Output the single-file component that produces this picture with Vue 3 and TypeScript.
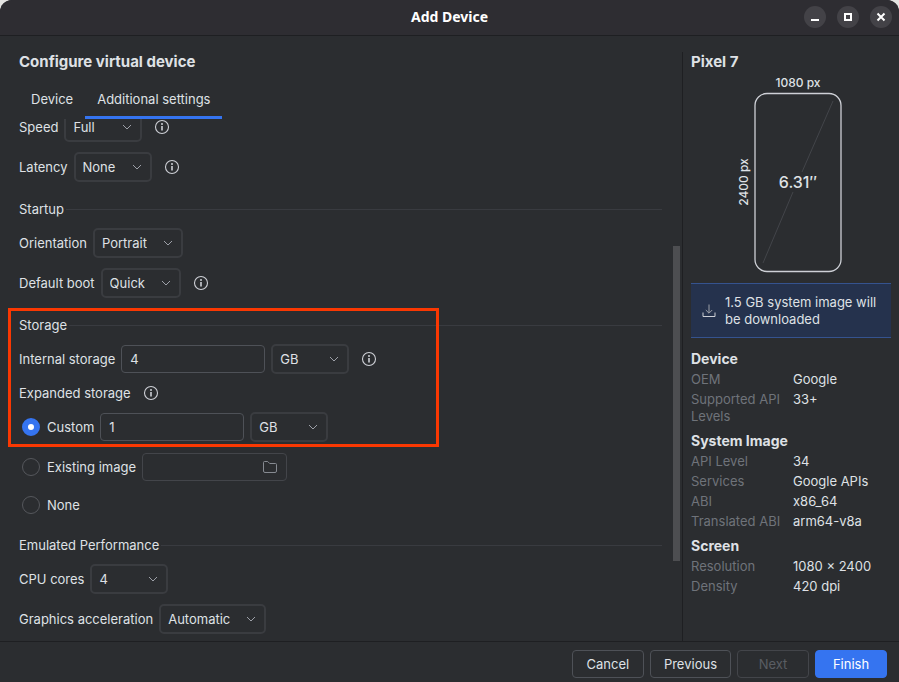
<script setup lang="ts">
import { ref } from 'vue'

interface DetailRow {
  label: string
  value: string
}
interface DetailGroup {
  title: string
  rows: DetailRow[]
}

const speed = ref('Full')
const latency = ref('None')
const orientation = ref('Portrait')
const boot = ref('Quick')
const internalSize = ref('4')
const internalUnit = ref('GB')
const expandedMode = ref('custom')
const customSize = ref('1')
const customUnit = ref('GB')
const imagePath = ref('')
const cores = ref('4')
const graphics = ref('Automatic')

const units = ['MB', 'GB', 'TB']

const details: DetailGroup[] = [
  {
    title: 'Device',
    rows: [
      { label: 'OEM', value: 'Google' },
      { label: 'Supported API Levels', value: '33+' },
    ],
  },
  {
    title: 'System Image',
    rows: [
      { label: 'API Level', value: '34' },
      { label: 'Services', value: 'Google APIs' },
      { label: 'ABI', value: 'x86_64' },
      { label: 'Translated ABI', value: 'arm64-v8a' },
    ],
  },
  {
    title: 'Screen',
    rows: [
      { label: 'Resolution', value: '1080 × 2400' },
      { label: 'Density', value: '420 dpi' },
    ],
  },
]
</script>

<template>
  <div class="dialog">
    <svg class="defs" width="0" height="0" aria-hidden="true">
      <symbol id="info" viewBox="0 0 16 16">
        <circle cx="8" cy="8" r="6.5" fill="none" stroke="currentColor" stroke-width="1.1" />
        <circle cx="8" cy="5" r="1" fill="currentColor" />
        <path d="M8 7v4.4" fill="none" stroke="currentColor" stroke-width="1.6" />
      </symbol>
    </svg>

    <header class="titlebar">
      <span></span>
      <h1>Add Device</h1>
      <div class="window-buttons">
        <button type="button" aria-label="Minimize">
          <svg viewBox="0 0 22 22"><path d="M7 14h8" stroke="#fff" stroke-width="2" /></svg>
        </button>
        <button type="button" aria-label="Maximize">
          <svg viewBox="0 0 22 22"><rect x="8" y="8" width="6" height="6" fill="none" stroke="#fff" stroke-width="2" /></svg>
        </button>
        <button type="button" aria-label="Close">
          <svg viewBox="0 0 22 22"><path d="M7.5 7.5l7 7M14.5 7.5l-7 7" stroke="#fff" stroke-width="2" /></svg>
        </button>
      </div>
    </header>

    <div class="body">
      <main class="settings">
        <h2 class="page-title">Configure virtual device</h2>
        <nav class="tabs" role="tablist">
          <button type="button" role="tab" aria-selected="false">Device</button>
          <button type="button" role="tab" aria-selected="true" class="active">Additional settings</button>
        </nav>

        <div class="viewport">
          <form class="form" @submit.prevent>
            <div class="row">
              <label for="speed">Speed</label>
              <span class="select">
                <select id="speed" v-model="speed"><option>Full</option><option>LTE</option><option>EDGE</option></select>
                <svg viewBox="0 0 10 6"><path d="M1 1l4 4 4-4" /></svg>
              </span>
              <button type="button" class="info" aria-label="About speed"><svg><use href="#info" /></svg></button>
            </div>
            <div class="row">
              <label for="latency">Latency</label>
              <span class="select">
                <select id="latency" v-model="latency"><option>None</option><option>UMTS</option><option>EDGE</option></select>
                <svg viewBox="0 0 10 6"><path d="M1 1l4 4 4-4" /></svg>
              </span>
              <button type="button" class="info" aria-label="About latency"><svg><use href="#info" /></svg></button>
            </div>

            <h3 class="section">Startup</h3>
            <div class="row">
              <label for="orientation">Orientation</label>
              <span class="select">
                <select id="orientation" v-model="orientation"><option>Portrait</option><option>Landscape</option></select>
                <svg viewBox="0 0 10 6"><path d="M1 1l4 4 4-4" /></svg>
              </span>
            </div>
            <div class="row">
              <label for="boot">Default boot</label>
              <span class="select">
                <select id="boot" v-model="boot"><option>Quick</option><option>Cold</option></select>
                <svg viewBox="0 0 10 6"><path d="M1 1l4 4 4-4" /></svg>
              </span>
              <button type="button" class="info" aria-label="About default boot"><svg><use href="#info" /></svg></button>
            </div>

            <div class="group highlighted">
              <h3 class="section">Storage</h3>
              <div class="row">
                <label for="internal">Internal storage</label>
                <input id="internal" v-model="internalSize" class="field" type="text" />
                <span class="select">
                  <select v-model="internalUnit" aria-label="Internal storage unit"><option v-for="u in units" :key="u">{{ u }}</option></select>
                  <svg viewBox="0 0 10 6"><path d="M1 1l4 4 4-4" /></svg>
                </span>
                <button type="button" class="info" aria-label="About internal storage"><svg><use href="#info" /></svg></button>
              </div>
              <div class="row text-row">
                <span>Expanded storage</span>
                <button type="button" class="info" aria-label="About expanded storage"><svg><use href="#info" /></svg></button>
              </div>
              <div class="row">
                <label class="choice"><input v-model="expandedMode" type="radio" name="expanded" value="custom" />Custom</label>
                <input v-model="customSize" class="field" type="text" aria-label="Custom size" />
                <span class="select">
                  <select v-model="customUnit" aria-label="Custom size unit"><option v-for="u in units" :key="u">{{ u }}</option></select>
                  <svg viewBox="0 0 10 6"><path d="M1 1l4 4 4-4" /></svg>
                </span>
              </div>
            </div>
            <div class="row">
              <label class="choice"><input v-model="expandedMode" type="radio" name="expanded" value="existing" />Existing image</label>
              <span class="browse">
                <input v-model="imagePath" type="text" aria-label="Image path" disabled />
                <button type="button" aria-label="Browse" disabled>
                  <svg viewBox="0 0 16 16"><path d="M1.5 3.5a1 1 0 0 1 1-1h3.2l2 2h5.8a1 1 0 0 1 1 1v6.5a1.5 1.5 0 0 1-1.5 1.5h-10a1.5 1.5 0 0 1-1.5-1.5z" /></svg>
                </button>
              </span>
            </div>
            <div class="row radio-row">
              <label class="choice"><input v-model="expandedMode" type="radio" name="expanded" value="none" />None</label>
            </div>

            <h3 class="section">Emulated Performance</h3>
            <div class="row">
              <label for="cores">CPU cores</label>
              <span class="select">
                <select id="cores" v-model="cores"><option>1</option><option>2</option><option>4</option></select>
                <svg viewBox="0 0 10 6"><path d="M1 1l4 4 4-4" /></svg>
              </span>
            </div>
            <div class="row">
              <label for="graphics">Graphics acceleration</label>
              <span class="select">
                <select id="graphics" v-model="graphics"><option>Automatic</option><option>Hardware</option><option>Software</option></select>
                <svg viewBox="0 0 10 6"><path d="M1 1l4 4 4-4" /></svg>
              </span>
            </div>
          </form>
          <div class="scrollbar"><div class="thumb"></div></div>
        </div>
      </main>

      <aside class="summary">
        <h2 class="page-title">Pixel 7</h2>
        <svg class="phone" viewBox="0 2 200 208" role="img" aria-label="Screen dimensions">
          <text x="107" y="17" text-anchor="middle" font-size="12">1080 px</text>
          <rect x="64" y="23.5" width="86" height="178" rx="12" stroke-width="1.3" />
          <path d="M142 31L111 102M102 122L72 193" />
          <text x="107" y="118" text-anchor="middle" font-size="16">6.31″</text>
          <text transform="translate(57 112) rotate(-90)" text-anchor="middle" font-size="12">2400 px</text>
        </svg>
        <div class="banner">
          <svg viewBox="0 0 16 16"><path d="M8 1.5v8.500M4.800 7l3.200 3.200L11.200 7" stroke="#9da0a8" /><path d="M2 9.500v4h12v-4" stroke="#ced0d6" /></svg>
          <p>1.5 GB system image will be downloaded</p>
        </div>
        <section v-for="group in details" :key="group.title" class="details">
          <h3>{{ group.title }}</h3>
          <dl>
            <template v-for="row in group.rows" :key="row.label">
              <dt>{{ row.label }}</dt>
              <dd>{{ row.value }}</dd>
            </template>
          </dl>
        </section>
      </aside>
    </div>

    <footer class="footer">
      <button type="button">Cancel</button>
      <button type="button">Previous</button>
      <button type="button" disabled>Next</button>
      <button type="button" class="primary">Finish</button>
    </footer>
  </div>
</template>

<style>
body {
  margin: 0;
  background: #e4e4e2;
}
</style>

<style scoped>
*,
*::after {
  box-sizing: border-box;
}
h1, h2, h3, p, dl, dd {
  margin: 0;
}
button, input, select {
  font: inherit;
  color: inherit;
  margin: 0;
}
.dialog {
  display: flex;
  flex-direction: column;
  height: 100vh;
  overflow: hidden;
  border-radius: 12px 12px 0 0;
  background: #2b2d30;
  color: #dfe1e5;
  font: 13px/18px Inter, sans-serif;
}
.defs {
  position: absolute;
}
.titlebar {
  display: grid;
  grid-template-columns: 1fr auto 1fr;
  align-items: center;
  height: 36px;
  padding: 0 7px 2px;
  border-bottom: 1px solid #1e1f22;
  background: #2e2d32;
}
.titlebar h1 {
  color: #fff;
  font: bold 14px/20px "Noto Sans", sans-serif;
}
.window-buttons {
  display: flex;
  justify-content: flex-end;
  gap: 11px;
}
.window-buttons button {
  width: 22px;
  height: 22px;
  padding: 0;
  border: 0;
  border-radius: 50%;
  background: #434247;
}
.window-buttons svg {
  display: block;
  fill: none;
}
.body {
  display: flex;
  flex: 1;
  min-height: 0;
}
.settings {
  display: flex;
  flex: 1;
  flex-direction: column;
  min-width: 0;
  padding-top: 16px;
}
.page-title {
  font-size: 15px;
  font-weight: 700;
  line-height: 20px;
}
.settings .page-title {
  padding-left: 19px;
}
.tabs {
  display: flex;
  padding: 8px 19px 0;
}
.tabs button {
  height: 39px;
  padding: 1px 12px 0;
  border: 0;
  border-bottom: 3px solid transparent;
  background: none;
}
.tabs .active {
  border-bottom-color: #3574f0;
}
.viewport {
  display: flex;
  flex: 1;
  min-height: 0;
  overflow: hidden;
}
.form {
  display: flex;
  flex: 1;
  flex-direction: column;
  gap: 10px;
  min-width: 0;
  margin-top: -7px;
  padding: 0 11px 0 19px;
}
.scrollbar {
  display: grid;
  grid-template-rows: 127fr 315fr 80fr;
  width: 9px;
  padding-right: 2px;
}
.thumb {
  grid-row: 2;
  background: #4d4e51;
}
.row {
  display: flex;
  flex-shrink: 0;
  align-items: center;
  gap: 6px;
  height: 30px;
}
.text-row {
  height: 18px;
}
.radio-row {
  height: 26px;
}
.section {
  display: flex;
  flex-shrink: 0;
  align-items: center;
  gap: 2px;
  margin-top: 8px;
  font-size: 13px;
  font-weight: 400;
}
.section::after {
  content: "";
  flex: 1;
  height: 1px;
  background: #393b40;
}
.group {
  position: relative;
  display: flex;
  flex-direction: column;
  gap: 10px;
}
.highlighted::after {
  content: "";
  position: absolute;
  top: 0;
  bottom: -5px;
  left: -11px;
  width: 431px;
  border: 3px solid #fa3802;
  pointer-events: none;
}
.select {
  position: relative;
  display: flex;
}
.select select {
  appearance: none;
  field-sizing: content;
  min-width: 78px;
  height: 30px;
  padding: 0 34px 0 7px;
  border: 2px solid #3a3c40;
  border-radius: 5px;
  outline: 0;
  background: #2b2d30;
}
.select svg {
  position: absolute;
  top: 12px;
  right: 10px;
  width: 10px;
  height: 6px;
  fill: none;
  stroke: #9da0a8;
  pointer-events: none;
}
.info {
  display: flex;
  margin-left: 6px;
  padding: 0;
  border: 0;
  background: none;
  color: #ced0d6;
}
.info svg {
  width: 16px;
  height: 16px;
}
.field {
  width: 144px;
  height: 28px;
  padding: 0 8px;
  border: 1px solid #4e5157;
  border-radius: 4px;
  outline: 0;
  background: #2b2d30;
}
.choice {
  display: flex;
  align-items: center;
  gap: 7px;
  padding-left: 3px;
}
.choice input {
  appearance: none;
  width: 18px;
  height: 18px;
  border: 1px solid #55575c;
  border-radius: 50%;
}
.choice input:checked {
  border: 6px solid #3574f0;
  background: #fff;
}
.browse {
  display: flex;
  align-items: center;
  width: 145px;
  height: 28px;
  padding-right: 8px;
  border: 1px solid #43454a;
  border-radius: 4px;
}
.browse input {
  flex: 1;
  min-width: 0;
  padding: 0 8px;
  border: 0;
  background: none;
}
.browse button {
  display: flex;
  padding: 0;
  border: 0;
  background: none;
}
.browse svg {
  width: 16px;
  height: 16px;
  fill: none;
  stroke: #868a91;
}
.summary {
  width: 217px;
  margin-top: 16px;
  padding: 0 8px;
  border-left: 1px solid #1e1f22;
}
.phone {
  display: block;
  width: 100%;
  margin-bottom: 3px;
  fill: none;
}
.phone text {
  fill: #dfe1e5;
  font-weight: 500;
}
.phone rect {
  stroke: #ced0d6;
}
.phone path {
  stroke: #43454a;
}
.banner {
  display: flex;
  align-items: center;
  gap: 8px;
  margin-bottom: 12px;
  padding: 10px 10px 9px;
  border: solid #35538f;
  border-width: 1px 0;
  background: #25324d;
  line-height: 17px;
}
.banner svg {
  flex: none;
  width: 16px;
  height: 16px;
  fill: none;
}
.details {
  margin-bottom: 7px;
  line-height: 17px;
}
.details h3 {
  margin-bottom: 4px;
  font-size: 14px;
  font-weight: 700;
}
.details dl {
  display: grid;
  grid-template-columns: 92px 1fr;
  gap: 3px 10px;
}
.details dt {
  color: #6f737a;
}
.footer {
  display: flex;
  justify-content: flex-end;
  gap: 6px;
  padding: 8px 12px 4px;
  border-top: 1px solid #1e1f22;
}
.footer button {
  min-width: 72px;
  height: 28px;
  padding: 0 13px;
  border: 1px solid #4e5157;
  border-radius: 4px;
  background: none;
}
.footer button:disabled {
  border-color: #43454a;
  color: #5a5d63;
}
.footer .primary {
  border-color: #3574f0;
  background: #3574f0;
  color: #fff;
}
</style>
